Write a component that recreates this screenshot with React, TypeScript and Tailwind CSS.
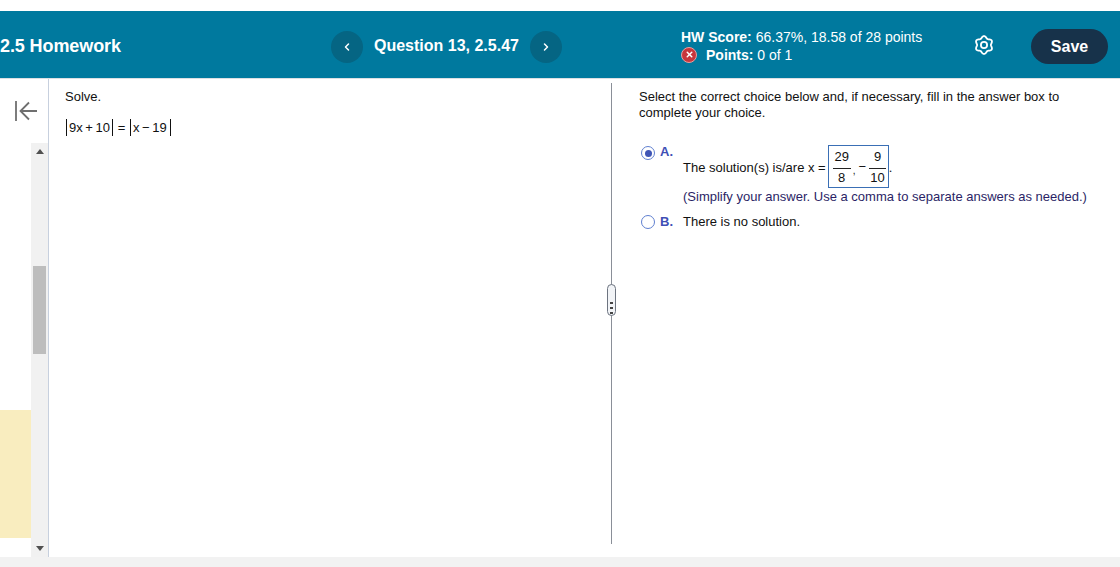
import React from "react";
import { ChevronLeft, ChevronRight, X } from "lucide-react";

const gearPath =
  Array.from({ length: 96 }, (_, i) => {
    const t = (i / 96) * Math.PI * 2;
    const r = 7.9 - 1.0 * Math.cos(6 * t);
    return `${i === 0 ? "M" : "L"}${(10 + r * Math.cos(t)).toFixed(2)} ${(10 + r * Math.sin(t)).toFixed(2)}`;
  }).join(" ") + " Z";

function Gear() {
  return (
    <svg className="shrink-0 mb-[2px]" width="20" height="20" viewBox="0 0 20 20" fill="none" stroke="white" strokeWidth="1.8">
      <path d={gearPath} />
      <circle cx="10" cy="10" r="3.1" />
    </svg>
  );
}

function Frac({ n, d, w }: { n: string; d: string; w: string }) {
  return (
    <span className={`inline-flex flex-col items-center ${w}`}>
      <span className="h-[21px] leading-[19px]">{n}</span>
      <span className="w-full border-t border-[#222]" />
      <span className="h-[18px] leading-[17px]">{d}</span>
    </span>
  );
}

function Abs({ children, cls }: { children: React.ReactNode; cls: string }) {
  return <span className={`inline-block border-x border-[#111] h-[17px] leading-[17px] ${cls}`}>{children}</span>;
}

export default function App() {
  return (
    <div className="w-[1120px] h-[567px] overflow-hidden flex flex-col bg-white text-[13px] text-[#111] font-['Liberation_Sans',Arial,sans-serif]">
      <div className="h-[11px] shrink-0" />
      <header className="h-[67px] shrink-0 bg-[#00799e] text-white flex items-center pt-[2px]">
        <div className="w-[331px] text-[18px] leading-[22px] font-bold -tracking-[0.1px]">2.5 Homework</div>
        <button className="w-8 h-8 mt-[2px] rounded-full bg-[#056583] flex items-center justify-center">
          <ChevronLeft size={12} strokeWidth={3} />
        </button>
        <div className="w-[167px] pl-[11px] text-[16px] font-bold whitespace-nowrap">Question 13, 2.5.47</div>
        <button className="w-8 h-8 mt-[2px] rounded-full bg-[#056583] flex items-center justify-center">
          <ChevronRight size={12} strokeWidth={3} />
        </button>
        <div className="ml-[119px] w-[293px] text-[14px] leading-[18px]">
          <div><b>HW Score:</b> 66.37%, 18.58 of 28 points</div>
          <div className="flex items-center">
            <span className="w-4 h-4 rounded-full bg-[#c8363c] border border-[#e8a0a0] flex items-center justify-center mr-[9px]">
              <X size={9} strokeWidth={4} />
            </span>
            <span><b>Points:</b> 0 of 1</span>
          </div>
        </div>
        <Gear />
        <button className="ml-[37px] w-[77px] h-[35px] mt-[2px] rounded-full bg-[#17324a] text-[16px] font-bold">Save</button>
      </header>
      <div className="flex-1 min-h-0 flex border-t border-[#dcdfe3]">
        <aside className="w-[49px] shrink-0 flex border-r border-[#c7d0de]">
          <div className="w-[31px] flex flex-col">
            <div className="h-[64px] flex pt-[21px] pl-[15px]">
              <svg className="shrink-0" width="23" height="22" viewBox="0 0 23 22" fill="none" stroke="#6f6f6f" strokeWidth="1.8">
                <path d="M1 1 V21" />
                <path d="M22 11 H5.5 M14 2.5 L5.5 11 L14 19.5" />
              </svg>
            </div>
            <div className="h-[267px]" />
            <div className="h-[128px] bg-[#f9edbf]" />
          </div>
          <div className="w-[17px] mt-[64px] bg-[#f1f1f1] flex flex-col items-center">
            <div className="h-[17px] flex items-center justify-center">
              <span className="border-x-[4px] border-x-transparent border-b-[5px] border-b-[#505050]" />
            </div>
            <div className="w-[13px] self-start ml-[2px] h-[88px] mt-[106px] bg-[#bdbdbd]" />
            <div className="flex-1" />
            <div className="h-[17px] flex items-center justify-center">
              <span className="border-x-[4px] border-x-transparent border-t-[5px] border-t-[#505050]" />
            </div>
          </div>
        </aside>
        <main className="w-[562px] shrink-0 pl-[17px] pt-[10px]">
          <div className="h-[15px] leading-[15px] -ml-[1px]">Solve.</div>
          <div className="mt-[15px] flex items-center h-[17px] leading-[17px] whitespace-nowrap">
            <Abs cls="w-[47px] pl-[2px] [word-spacing:-1px]">9x + 10</Abs>
            <span className="w-[17px] text-center">=</span>
            <Abs cls="w-[41px] pl-[2px] [word-spacing:-1px]">x − 19</Abs>
          </div>
        </main>
        <div className="relative w-px shrink-0 my-[4px] mb-[13px] bg-[#8a8f98]">
          <div className="absolute left-[-4px] top-[201px] w-[9px] h-[32px] rounded-full bg-[#f2f4f7] border border-[#6d7480] flex flex-col items-center justify-end gap-[3px] pb-[1px]">
            <span className="w-[3px] h-[2px] bg-[#444]" />
            <span className="w-[3px] h-[2px] bg-[#444]" />
            <span className="w-[3px] h-[2px] bg-[#444]" />
          </div>
        </div>
        <section className="flex-1 pl-[27px] pt-[10px]">
          <div className="w-[440px] leading-[16px]">
            Select the correct choice below and, if necessary, fill in the answer box to complete your choice.
          </div>
          <div className="mt-[24px] flex">
            <span className="w-[14px] h-[14px] mt-[1px] ml-[2px] rounded-full border-[1.5px] border-[#5f7fd0] flex items-center justify-center">
              <span className="w-[7px] h-[7px] rounded-full bg-[#3f55b5]" />
            </span>
            <span className="ml-[5px] w-[23px] font-bold text-[#3f4fb5] leading-[13px]">A.</span>
            <div>
              <div className="flex items-center whitespace-nowrap">
                <span className="mt-[2px]">The solution(s) is/are x =</span>
                <span className="ml-[2px] h-[43px] w-[61px] border border-[#3a6fb5] flex items-center px-[4px]">
                  <Frac n="29" d="8" w="w-[18px] shrink-0" />
                  <span className="mt-[8px] ml-[2px] mr-[3px] text-[10px]">,</span>
                  <span>−</span>
                  <Frac n="9" d="10" w="w-[17px] shrink-0 ml-[3px]" />
                </span>
                <span className="mt-[2px]">.</span>
              </div>
              <div className="mt-[1px] leading-[15px] whitespace-nowrap text-[#2b1f66]">
                (Simplify your answer. Use a comma to separate answers as needed.)
              </div>
            </div>
          </div>
          <div className="mt-[10px] flex">
            <span className="w-[14px] h-[14px] mt-[1px] ml-[2px] rounded-full border-[1.5px] border-[#5f7fd0]" />
            <span className="ml-[5px] w-[23px] font-bold text-[#3f4fb5] leading-[15px]">B.</span>
            <span className="leading-[15px]">There is no solution.</span>
          </div>
        </section>
      </div>
      <div className="h-[10px] shrink-0 bg-[#f2f2f2]" />
    </div>
  );
}
